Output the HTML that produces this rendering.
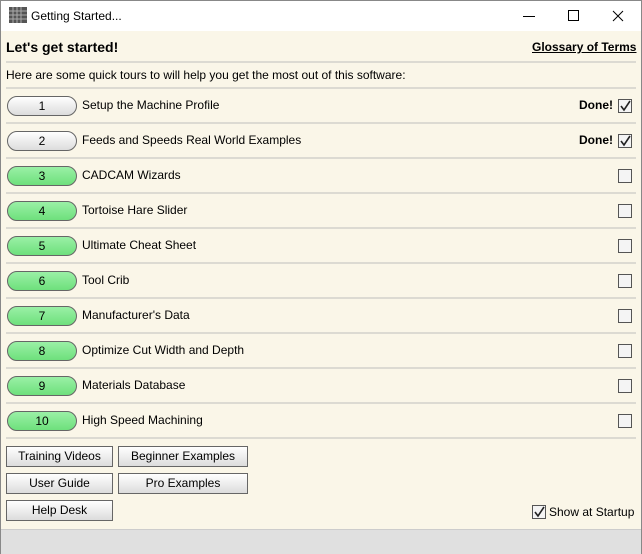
<!DOCTYPE html>
<html><head><style>
body{margin:0;width:642px;height:554px;overflow:hidden;font-family:"Liberation Sans",Arial,sans-serif;font-size:12px;color:#000;}
.win{position:absolute;left:0;top:0;width:640px;height:552px;border:1px solid #888;background:#faf6e8;}
.title{position:absolute;left:0;top:0;width:640px;height:30px;background:#fff;}
.title span{position:absolute;left:30px;top:8px;font-size:12px;}
.hr{position:absolute;left:5px;width:630px;height:0;border-top:2px solid #dcdad2;}
.pill{position:absolute;left:6px;width:68px;height:18px;border:1px solid #666;border-radius:10px;text-align:center;line-height:18px;font-size:12px;}
.g{background:linear-gradient(#9af0a6,#6ee07c);}
.w{background:linear-gradient(#fff,#dcdcdc);}
.lbl{position:absolute;left:81px;font-size:12px;}
.cb{position:absolute;left:617px;width:12px;height:12px;border:1px solid #555;background:#f4f4f4;}
.done{position:absolute;left:578px;font-weight:bold;font-size:12px;}
.btn{position:absolute;height:19px;border:1px solid #666;background:linear-gradient(#fff,#dcdcdc);text-align:center;line-height:19px;font-size:12px;}
</style></head><body>
<div class="win">
<div class="title">
<svg style="position:absolute;left:8px;top:6px" width="18" height="16"><rect x="0" y="0" width="18" height="16" fill="#555"/><g stroke="#aaa" stroke-width="1"><path d="M0 4H18M0 8H18M0 12H18M4 0V16M8 0V16M12 0V16"/></g></svg>
<span>Getting Started...</span>
<svg style="position:absolute;left:520px;top:8px" width="110" height="14"><path d="M2 7.5H14" stroke="#000"/><rect x="47.5" y="1.5" width="10" height="10" fill="none" stroke="#000"/><path d="M92 2L102 12M102 2L92 12" stroke="#000"/></svg>
</div>
<div style="position:absolute;left:5px;top:38px;font-weight:bold;font-size:14px">Let's get started!</div>
<div style="position:absolute;left:531px;top:39px;font-weight:bold;text-decoration:underline">Glossary of Terms</div>
<div class="hr" style="top:60px"></div>
<div style="position:absolute;left:5px;top:67px">Here are some quick tours to will help you get the most out of this software:</div>
<div class="hr" style="top:86px"></div>

<div class="pill w" style="top:95px">1</div><div class="lbl" style="top:97px">Setup the Machine Profile</div><div class="done" style="top:97px">Done!</div><div class="cb" style="top:98px"><svg width="12" height="12"><path d="M2 6L5 10L11 1" stroke="#222" stroke-width="1.6" fill="none"/></svg></div>
<div class="hr" style="top:121px"></div>
<div class="pill w" style="top:130px">2</div><div class="lbl" style="top:132px">Feeds and Speeds Real World Examples</div><div class="done" style="top:132px">Done!</div><div class="cb" style="top:133px"><svg width="12" height="12"><path d="M2 6L5 10L11 1" stroke="#222" stroke-width="1.6" fill="none"/></svg></div>
<div class="hr" style="top:156px"></div>
<div class="pill g" style="top:165px">3</div><div class="lbl" style="top:167px">CADCAM Wizards</div><div class="cb" style="top:168px"></div>
<div class="hr" style="top:191px"></div>
<div class="pill g" style="top:200px">4</div><div class="lbl" style="top:202px">Tortoise Hare Slider</div><div class="cb" style="top:203px"></div>
<div class="hr" style="top:226px"></div>
<div class="pill g" style="top:235px">5</div><div class="lbl" style="top:237px">Ultimate Cheat Sheet</div><div class="cb" style="top:238px"></div>
<div class="hr" style="top:261px"></div>
<div class="pill g" style="top:270px">6</div><div class="lbl" style="top:272px">Tool Crib</div><div class="cb" style="top:273px"></div>
<div class="hr" style="top:296px"></div>
<div class="pill g" style="top:305px">7</div><div class="lbl" style="top:307px">Manufacturer's Data</div><div class="cb" style="top:308px"></div>
<div class="hr" style="top:331px"></div>
<div class="pill g" style="top:340px">8</div><div class="lbl" style="top:342px">Optimize Cut Width and Depth</div><div class="cb" style="top:343px"></div>
<div class="hr" style="top:366px"></div>
<div class="pill g" style="top:375px">9</div><div class="lbl" style="top:377px">Materials Database</div><div class="cb" style="top:378px"></div>
<div class="hr" style="top:401px"></div>
<div class="pill g" style="top:410px">10</div><div class="lbl" style="top:412px">High Speed Machining</div><div class="cb" style="top:413px"></div>
<div class="hr" style="top:436px"></div>

<div class="btn" style="left:5px;top:445px;width:105px">Training Videos</div>
<div class="btn" style="left:117px;top:445px;width:128px">Beginner Examples</div>
<div class="btn" style="left:5px;top:472px;width:105px">User Guide</div>
<div class="btn" style="left:117px;top:472px;width:128px">Pro Examples</div>
<div class="btn" style="left:5px;top:499px;width:105px">Help Desk</div>
<div class="cb" style="left:531px;top:504px"><svg width="12" height="12"><path d="M2 6L5 10L11 1" stroke="#222" stroke-width="1.6" fill="none"/></svg></div>
<div style="position:absolute;left:548px;top:504px">Show at Startup</div>
<div style="position:absolute;left:0;top:528px;width:640px;height:24px;background:#e0e0e0;border-top:1px solid #ccc"></div>
</div>
</body></html>
